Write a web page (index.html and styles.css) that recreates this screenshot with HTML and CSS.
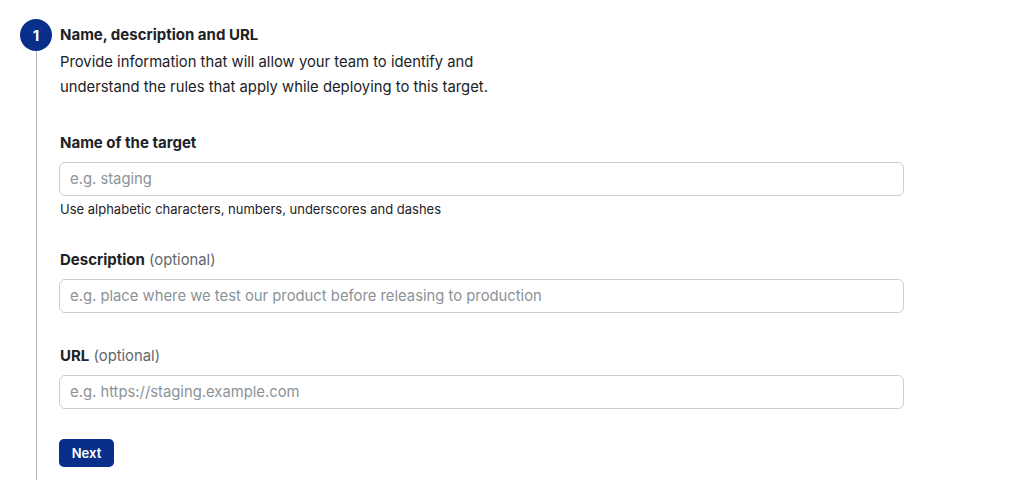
FILE: index.html
```html
<!DOCTYPE html>
<html>
<head>
<meta charset="utf-8">
<link rel="stylesheet" href="styles.css">
</head>
<body>
<div class="step">
  <div class="rail">
    <div class="badge">1</div>
    <div class="line"></div>
  </div>
  <div class="content">
    <h2 class="title">Name, description and URL</h2>
    <p class="intro">Provide information that will allow your team to identify and<br>understand the rules that apply while deploying to this target.</p>

    <div class="field first">
      <label class="label"><strong>Name of the target</strong></label>
      <input class="input" type="text" placeholder="e.g. staging">
      <div class="help">Use alphabetic characters, numbers, underscores and dashes</div>
    </div>

    <div class="field">
      <label class="label"><strong>Description</strong> <span class="opt">(optional)</span></label>
      <input class="input" type="text" placeholder="e.g. place where we test our product before releasing to production">
    </div>

    <div class="field url">
      <label class="label"><strong>URL</strong> <span class="opt">(optional)</span></label>
      <input class="input" type="text" placeholder="e.g. https://staging.example.com">
    </div>

    <button class="next">Next</button>
  </div>
</div>
</body>
</html>
```
FILE: styles.css
```css
* { box-sizing: border-box; }
html, body { margin: 0; padding: 0; background: #fff; }
body {
  font-family: Inter, "Liberation Sans", sans-serif;
  color: #1d2226;
  height: 480px;
  overflow: hidden;
}
.step {
  display: flex;
  padding: 19px 0 0 20px;
  height: 480px;
}
.rail {
  width: 32px;
  display: flex;
  flex-direction: column;
  align-items: center;
  flex-shrink: 0;
}
.badge {
  width: 32px;
  height: 32px;
  border-radius: 50%;
  background: #0a2f8a;
  color: #fff;
  font-weight: 700;
  font-size: 15px;
  display: flex;
  align-items: center;
  justify-content: center;
}
.line {
  width: 1px;
  flex: 1;
  background: #b8bbbe;
}
.content {
  margin-left: 8px;
  width: 844px;
}
.title {
  margin: 6px 0 0;
  font-size: 15px;
  font-weight: 700;
  line-height: 20px;
}
.intro {
  margin: 5px 0 0;
  font-size: 14.8px;
  line-height: 25px;
}
.field { margin-top: 32px; }
.field.first { margin-top: 33px; }
.field.url { margin-top: 33px; }
.label {
  display: block;
  font-size: 15px;
  line-height: 20px;
}
.label strong { font-weight: 700; }
.opt { color: #5f666b; font-size: 14.8px; }
.input {
  display: block;
  width: 845px;
  height: 34px;
  margin: 9px 0 0 -1px;
  border: 1px solid #cbcdcf;
  border-radius: 6px;
  padding: 0 10px;
  font-family: inherit;
  font-size: 14.8px;
  color: #1d2226;
  outline: none;
}
.input::placeholder { color: #8b9399; }
.help {
  margin-top: 5px;
  font-size: 13px;
  line-height: 17px;
}
.next {
  margin: 30px 0 0 -1px;
  width: 55px;
  height: 28px;
  border: none;
  border-radius: 5px;
  background: #0a2f8a;
  color: #fff;
  font-family: inherit;
  font-size: 13px;
  font-weight: 600;
  padding: 0;
}
```
